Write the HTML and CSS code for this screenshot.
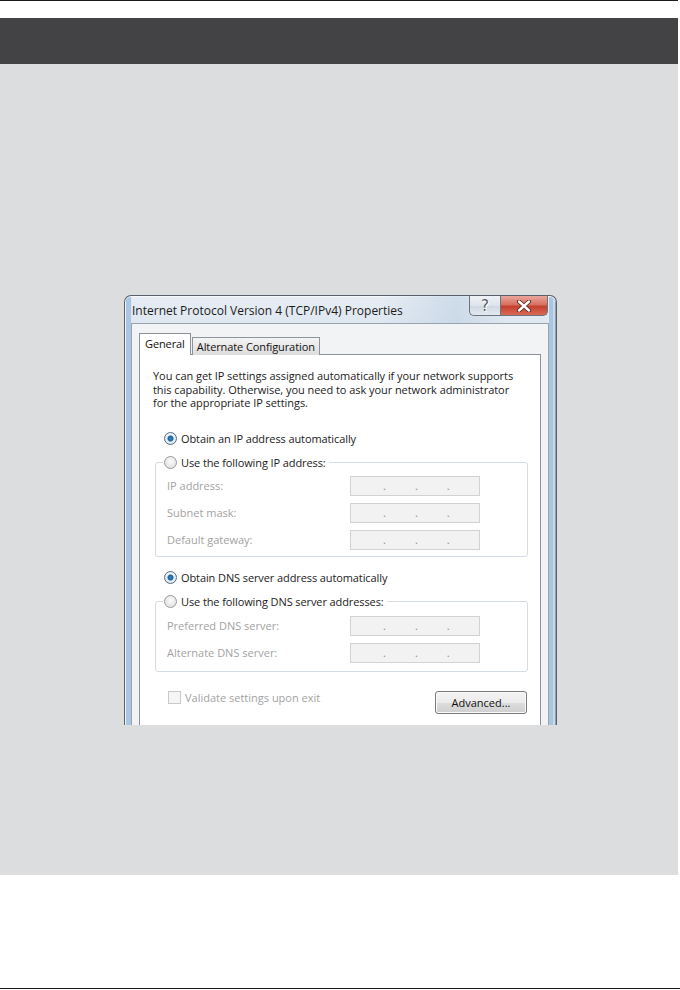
FILE: index.html
```html
<!DOCTYPE html>
<html lang="en">

<head>
    <meta charset="UTF-8">
    <meta name="viewport" content="width=device-width, initial-scale=1.0">
    <title>TCP/IPv4 Properties</title>
    <link rel="stylesheet" href="styles.css">
</head>

<body>
    <div class="sheet">
        <div class="top-rule"></div>
        <div class="header-band"></div>

        <div class="figure">
            <div class="window">
                <div class="titlebar">
                    <span class="title">Internet Protocol Version 4 (TCP/IPv4) Properties</span>
                    <div class="caption-btns">
                        <div class="cap-btn help">?</div>
                        <div class="cap-btn close">
                            <svg width="16" height="12" viewBox="0 0 16 12">
                                <path d="M3 1.5 L13 10.5 M13 1.5 L3 10.5" stroke="#5a2a26" stroke-width="4.2" stroke-linecap="round" fill="none"/>
                                <path d="M3 1.5 L13 10.5 M13 1.5 L3 10.5" stroke="#ffffff" stroke-width="2.4" stroke-linecap="round" fill="none"/>
                            </svg>
                        </div>
                    </div>
                </div>

                <div class="client">
                    <div class="tabs">
                        <div class="tab active">General</div>
                        <div class="tab">Alternate Configuration</div>
                    </div>

                    <div class="tab-page">
                        <p class="intro">You can get IP settings assigned automatically if your network supports<br>this capability. Otherwise, you need to ask your network administrator<br>for the appropriate IP settings.</p>

                        <div class="radio-row first">
                            <span class="radio checked"></span>Obtain an IP address automatically
                        </div>

                        <fieldset class="group">
                            <legend><span class="radio"></span>Use the following IP address:</legend>
                            <div class="field-row">
                                <span class="field-label">IP address:</span>
                                <div class="ip-box"><i>.</i><i>.</i><i>.</i></div>
                            </div>
                            <div class="field-row">
                                <span class="field-label">Subnet mask:</span>
                                <div class="ip-box"><i>.</i><i>.</i><i>.</i></div>
                            </div>
                            <div class="field-row">
                                <span class="field-label">Default gateway:</span>
                                <div class="ip-box"><i>.</i><i>.</i><i>.</i></div>
                            </div>
                        </fieldset>

                        <div class="radio-row dns">
                            <span class="radio checked"></span>Obtain DNS server address automatically
                        </div>

                        <fieldset class="group dns-group">
                            <legend><span class="radio"></span>Use the following DNS server addresses:</legend>
                            <div class="field-row">
                                <span class="field-label">Preferred DNS server:</span>
                                <div class="ip-box"><i>.</i><i>.</i><i>.</i></div>
                            </div>
                            <div class="field-row">
                                <span class="field-label">Alternate DNS server:</span>
                                <div class="ip-box"><i>.</i><i>.</i><i>.</i></div>
                            </div>
                        </fieldset>

                        <div class="footer-row">
                            <div class="check-row"><span class="checkbox"></span>Validate settings upon exit</div>
                            <div class="button">Advanced...</div>
                        </div>
                    </div>
                </div>
            </div>
        </div>

        <div class="bottom-rule"></div>
    </div>
</body>

</html>
```

FILE: styles.css
```css
body {
    margin: 0;
    padding: 0;
    background-color: #fff;
    font-family: "Open Sans", "Liberation Sans", sans-serif;
}

.sheet {
    width: 680px;
    height: 990px;
    display: flex;
    flex-direction: column;
}

.top-rule {
    width: 678px;
    height: 1px;
    background-color: #1a1a1a;
}

.header-band {
    width: 678px;
    height: 46px;
    margin-top: 17px;
    background-color: #434345;
}

.figure {
    width: 678px;
    height: 811px;
    background-color: #dcdddf;
    padding: 231px 0 0 124px;
    box-sizing: border-box;
    overflow: hidden;
}

.bottom-rule {
    width: 680px;
    height: 1px;
    margin-top: 113px;
    background-color: #1a1a1a;
}

/* dialog window */

.window {
    width: 433px;
    height: 430px;
    overflow: hidden;
    box-sizing: border-box;
    border: 1px solid #596068;
    border-bottom: none;
    border-radius: 7px 7px 0 0;
    padding: 0 7px 0 6px;
    background:
        linear-gradient(90deg, #eef3f8 0 1px, #a9c6e5 1px 6px, #dfe8f1 6px 100%) left top / 7px 100% no-repeat,
        linear-gradient(90deg, #e3ebf3 0 1px, #a9c6e5 1px 5px, #c9d7e6 5px 7px, #8f9fb0 7px 100%) right top / 8px 100% no-repeat,
        linear-gradient(180deg, #e7edf4 0, #dbe4ee 40px, #d6e1ec 100%);
    box-shadow: inset 0 1px 0 #f6f9fc;
}

.titlebar {
    height: 27px;
    display: flex;
    justify-content: space-between;
    align-items: flex-start;
    background: linear-gradient(90deg, rgba(255, 255, 255, 0) 60%, rgba(190, 208, 226, 0.6) 78%, rgba(255, 255, 255, 0) 90%);
}

.title {
    font-size: 12px;
    color: #1b1b1b;
    padding: 6px 0 0 1px;
}

.caption-btns {
    display: flex;
    margin-right: 1px;
}

.cap-btn {
    height: 20px;
    box-sizing: border-box;
    border: 1px solid #6a737e;
    border-top: none;
    display: flex;
    align-items: center;
    justify-content: center;
}

.help {
    width: 31px;
    border-radius: 0 0 0 5px;
    border-right: none;
    background: linear-gradient(180deg, #eef2f6 0, #dde4ec 50%, #cfd8e2 51%, #e3e9ef 100%);
    color: #555b62;
    font-family: "DejaVu Sans", sans-serif;
    font-size: 15px;
    line-height: 18px;
    text-shadow: 0 0 1px #fff, 1px 1px 0 #fff;
}

.close {
    width: 48px;
    border-radius: 0 0 5px 0;
    background: linear-gradient(180deg, #e9a79c 0, #d8705f 45%, #c5402f 55%, #d96a55 100%);
}

.client {
    height: 410px;
    box-sizing: border-box;
    background-color: #f2f3f4;
    border: 1px solid #98a3af;
    border-bottom: none;
    padding: 9px 7px 0 7px;
}

/* tabs */

.tabs {
    display: flex;
    align-items: flex-end;
    height: 22px;
    margin-bottom: -1px;
    position: relative;
    z-index: 1;
}

.tab {
    font-size: 11px;
    color: #111;
    height: 18px;
    line-height: 17px;
    padding: 0 4px 0 4px;
    box-sizing: border-box;
    border: 1px solid #8f939b;
    border-bottom: none;
    background: linear-gradient(180deg, #f4f4f4 0, #e9e9e9 50%, #dcdcdc 100%);
    letter-spacing: -0.1px;
}

.tab.active {
    height: 22px;
    line-height: 20px;
    padding: 0 5px 0 5px;
    margin-right: 1px;
    background: #fff;
    border-color: #8c9099;
}

.tab-page {
    height: 400px;
    box-sizing: border-box;
    background-color: #fff;
    border: 1px solid #8c9099;
    padding: 14px 12px 0 15px;
    font-size: 11px;
    color: #1b1b1b;
}

.intro {
    margin: 0 0 0 -2px;
    line-height: 13.5px;
    letter-spacing: -0.05px;
}

.radio-row {
    display: flex;
    align-items: center;
    height: 16px;
    margin: 12px 0 8px 9px;
    letter-spacing: -0.1px;
}

.radio-row.first {
    margin-top: 21px;
}

.radio-row.dns {
    margin-top: 13px;
}

.radio {
    width: 13px;
    height: 13px;
    box-sizing: border-box;
    border-radius: 50%;
    border: 1px solid #9a9a9a;
    background: radial-gradient(circle at 50% 40%, #fbfbfb 0, #e8e8e8 60%, #d6d6d6 100%);
    margin-right: 4px;
    flex-shrink: 0;
}

.radio.checked {
    border-color: #4f6f8f;
    background:
        radial-gradient(circle at 50% 50%, #2a8ad4 0, #1d5f9c 2.5px, rgba(0, 0, 0, 0) 3.5px),
        radial-gradient(circle at 50% 40%, #fdfdfd 0, #e1e6ea 70%, #c9d1d8 100%);
}

/* group boxes */

.group {
    margin: 0;
    padding: 5px 11px 6px 11px;
    border: 1px solid #d5dde3;
    border-radius: 3px;
}

.dns-group {
    padding-top: 6px;
    padding-bottom: 8px;
}

.group legend {
    display: flex;
    align-items: center;
    height: 16px;
    padding: 0 3px 0 1px;
    margin-left: -4px;
    background-color: #fff;
    letter-spacing: -0.1px;
}

.field-row {
    display: flex;
    align-items: center;
    height: 20px;
    margin-bottom: 7px;
    color: #a3a3a3;
}

.field-row:last-child {
    margin-bottom: 0;
}

.field-label {
    width: 183px;
}

.ip-box {
    width: 130px;
    height: 20px;
    box-sizing: border-box;
    border: 1px solid #d2d2d2;
    background-color: #f2f2f2;
    display: flex;
    gap: 29px;
    padding-left: 32px;
    color: #8d8d8d;
    line-height: 17px;
}

.ip-box i {
    font-style: normal;
}

/* footer */

.footer-row {
    display: flex;
    justify-content: space-between;
    align-items: flex-start;
    margin-top: 18px;
    padding-left: 13px;
}

.check-row {
    display: flex;
    align-items: center;
    color: #a3a3a3;
    height: 16px;
}

.checkbox {
    width: 13px;
    height: 13px;
    box-sizing: border-box;
    border: 1px solid #c9c9c9;
    background-color: #f5f5f5;
    margin-right: 4px;
}

.button {
    width: 92px;
    height: 23px;
    box-sizing: border-box;
    border: 1px solid #7a7a7a;
    border-radius: 3px;
    background: linear-gradient(180deg, #f4f4f4 0, #ebebeb 50%, #dddddd 51%, #cfcfcf 100%);
    box-shadow: inset 0 0 0 1px #fbfbfb;
    color: #111;
    text-align: center;
    line-height: 21px;
    margin: 1px 1px 0 0;
}
```
